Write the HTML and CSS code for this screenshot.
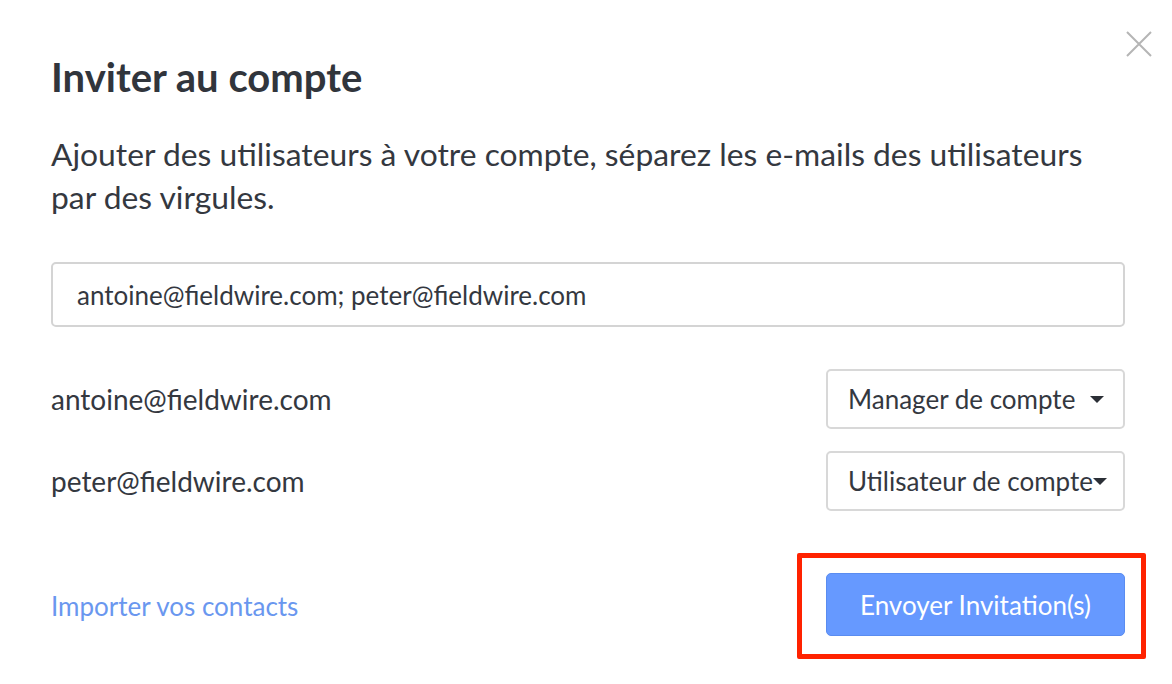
FILE: index.html
```html
<!DOCTYPE html>
<html lang="fr">
<head>
<meta charset="utf-8">
<title>Inviter au compte</title>
<link rel="stylesheet" href="styles.css">
</head>
<body>
<div class="dialog">
  <button class="close" aria-label="Fermer">
    <svg width="26" height="26" viewBox="0 0 26 26"><path d="M1 1 L25 25 M25 1 L1 25" stroke="#b5b5b5" stroke-width="2" fill="none"/></svg>
  </button>
  <h1 class="title">Inviter au compte</h1>
  <p class="intro">Ajouter des utilisateurs à votre compte, séparez les e-mails des utilisateurs par des virgules.</p>
  <div class="input">antoine@fieldwire.com; peter@fieldwire.com</div>
  <div class="rows">
    <div class="row">
      <span class="email">antoine@fieldwire.com</span>
      <div class="select"><span class="label">Manager de compte</span><span class="caret"></span></div>
    </div>
    <div class="row">
      <span class="email">peter@fieldwire.com</span>
      <div class="select"><span class="label">Utilisateur de compte</span><span class="caret"></span></div>
    </div>
  </div>
  <div class="footer">
    <a class="link" href="#">Importer vos contacts</a>
    <div class="highlight">
      <button class="primary">Envoyer Invitation(s)</button>
    </div>
  </div>
</div>
</body>
</html>
```
FILE: styles.css
```css
html, body {
  margin: 0;
  padding: 0;
  background: #ffffff;
}
body {
  font-family: Lato, "Open Sans", sans-serif;
  color: #34383f;
}
.dialog {
  position: relative;
  width: 1172px;
  height: 684px;
  box-sizing: border-box;
  padding: 53px 47px 0 51px;
}
.close {
  position: absolute;
  top: 31px;
  right: 20px;
  width: 26px;
  height: 26px;
  padding: 0;
  border: 0;
  background: none;
}
.close svg { display: block; }
.title {
  margin: 0;
  font-size: 40px;
  font-weight: 700;
  line-height: 48px;
  color: #31353c;
}
.intro {
  margin: 32px 0 0 0;
  font-size: 31.8px;
  line-height: 43px;
  color: #34383f;
}
.input {
  margin-top: 43px;
  height: 65px;
  box-sizing: border-box;
  border: 2px solid #d4d4d4;
  border-radius: 5px;
  padding: 0 0 0 24px;
  display: flex;
  align-items: center;
  font-size: 26px;
  color: #34383f;
}
.rows {
  margin-top: 42px;
  display: flex;
  flex-direction: column;
  gap: 22px;
}
.row {
  display: flex;
  align-items: center;
  justify-content: space-between;
  height: 60px;
}
.email {
  font-size: 28px;
  color: #34383f;
}
.select {
  width: 299px;
  height: 60px;
  box-sizing: border-box;
  border: 2px solid #d8d8d8;
  border-radius: 5px;
  display: flex;
  align-items: center;
  padding: 0 19px 0 20px;
  font-size: 26px;
  color: #34383f;
  white-space: nowrap;
}
.label { flex-shrink: 0; }
.caret {
  flex-shrink: 0;
  width: 0;
  height: 0;
  border-left: 7px solid transparent;
  border-right: 7px solid transparent;
  border-top: 7px solid #2b2f36;
  margin-left: auto;
}
.footer {
  margin-top: 42px;
  display: flex;
  align-items: center;
  justify-content: space-between;
}
.link {
  font-size: 26px;
  color: #6a97ef;
  text-decoration: none;
}
.highlight {
  border: 5px solid #ff2200;
  border-radius: 2px;
  padding: 15px 16px 18px 24px;
  margin-right: -21px;
}
.primary {
  display: block;
  width: 299px;
  height: 63px;
  background: #6699ff;
  border: 1px solid #5a8cf0;
  border-radius: 5px;
  color: #ffffff;
  font-family: Lato, "Open Sans", sans-serif;
  font-size: 26px;
  padding: 0;
}
```
